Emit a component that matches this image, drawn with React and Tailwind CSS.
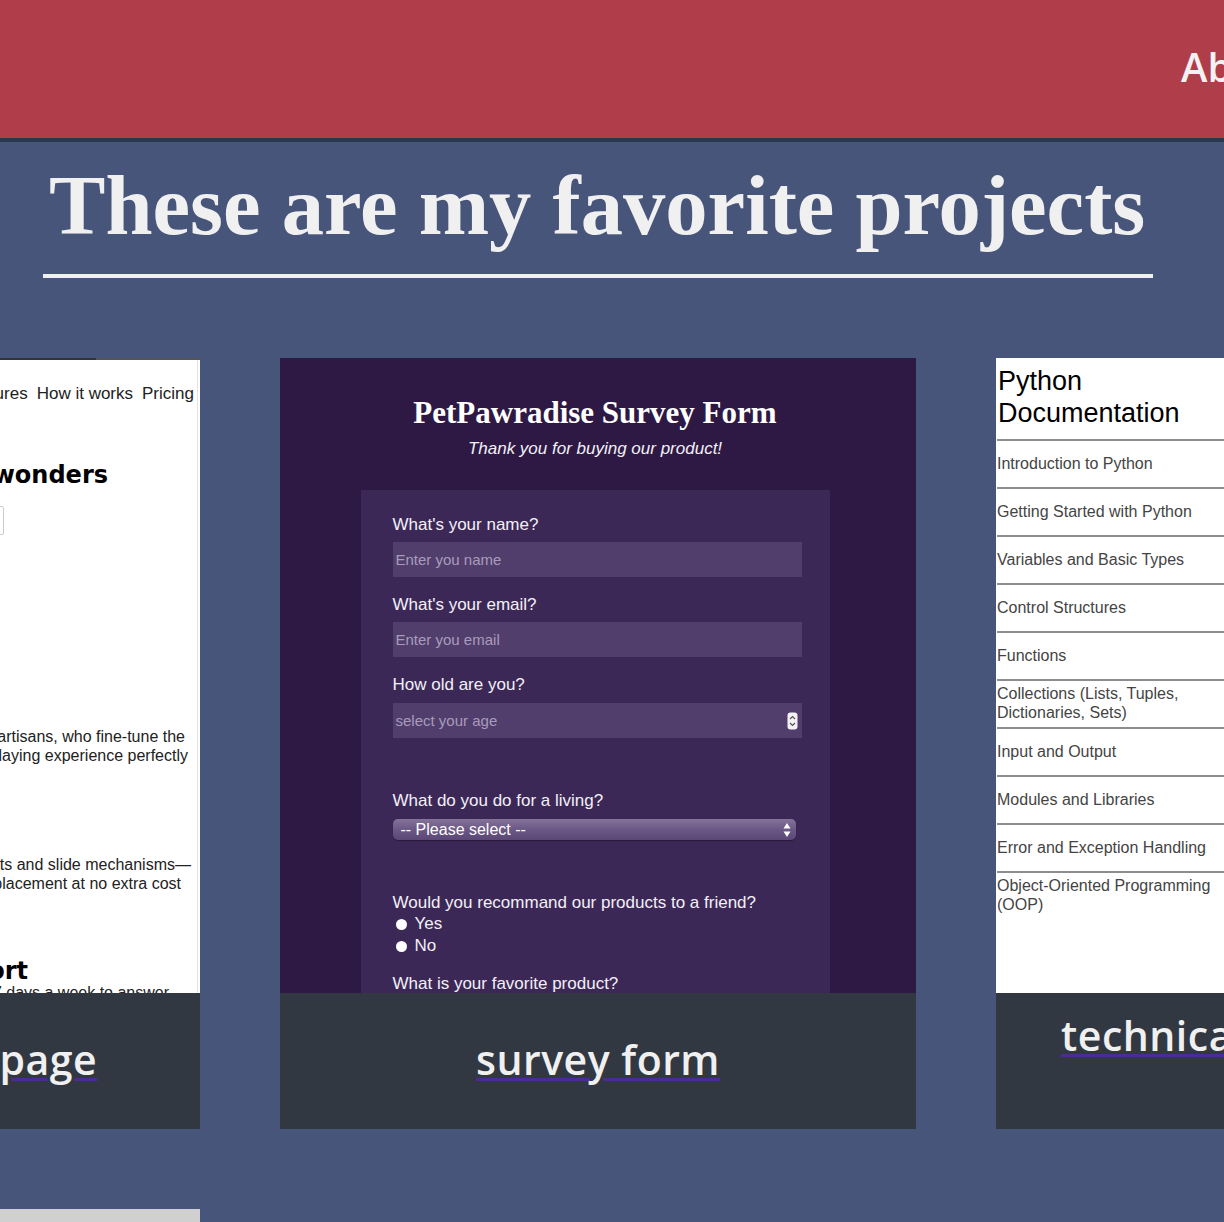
import React from 'react';

const sans = "font-['Liberation_Sans',Arial,sans-serif]";

function SpinIcon() {
    return (
        <svg width="11" height="18" viewBox="0 0 11 18">
            <rect x="0.5" y="0.5" width="10" height="17" rx="3" fill="#f4f2f7" />
            <path d="M3 7 L5.5 4.5 L8 7" stroke="#555" strokeWidth="1.2" fill="none" />
            <path d="M3 11 L5.5 13.5 L8 11" stroke="#555" strokeWidth="1.2" fill="none" />
        </svg>
    );
}

function SelectArrows() {
    return (
        <svg width="8" height="16" viewBox="0 0 8 16">
            <path d="M4 1 L7.5 6.5 L0.5 6.5 Z" fill="#fff" />
            <path d="M4 15 L7.5 9.5 L0.5 9.5 Z" fill="#fff" />
        </svg>
    );
}

function LandingShot() {
    return (
        <div className={`h-full bg-white flex flex-col ${sans} text-[#222]`}>
            <div className="flex h-[2px] shrink-0">
                <div className="w-[532px] bg-[#333]" />
                <div className="flex-1 bg-[#555]" />
            </div>
            <div className="flex flex-1">
                <div className="flex-1 flex flex-col whitespace-nowrap">
                    <nav className="mt-[24px] flex justify-end gap-[9px] pr-[3px] text-[17px] leading-[20px] text-[#222]">
                        <span>Home</span>
                        <span>Features</span>
                        <span>How it works</span>
                        <span>Pricing</span>
                    </nav>
                    <h3 className="mt-[56px] pr-[89px] text-right font-['DejaVu_Sans',sans-serif] font-bold text-[24px] leading-[30px] text-black">
                        Handcrafted piano wonders
                    </h3>
                    <div className="mt-[16px] mr-[193px] ml-auto w-[300px] h-[29px] border border-[#ccc] rounded-[2px]" />
                    <p className="mt-[192px] text-right pr-[12px] text-[16px] leading-[19px]">
                        Every piano is tuned by our master artisans, who fine-tune the
                    </p>
                    <p className="text-right pr-[9px] text-[16px] leading-[19px]">
                        sound and action to make your playing experience perfectly
                    </p>
                    <p className="mt-[90px] text-right pr-[6px] text-[16px] leading-[19px]">
                        We guarantee all of our keys, pedal parts and slide mechanisms—
                    </p>
                    <p className="text-right pr-[16px] text-[16px] leading-[19px]">
                        if anything breaks we'll send a replacement at no extra cost
                    </p>
                    <h3 className="mt-[63px] pr-[169px] text-right font-['DejaVu_Sans',sans-serif] font-bold text-[24px] leading-[30px] text-black">
                        24/7 Support
                    </h3>
                    <p className="mt-[-3px] text-right pr-[28px] text-[16px] leading-[19px]">
                        Our team is here 24 hours a day, 7 days a week to answer
                    </p>
                </div>
                <div className="w-px bg-[#e3e3e3]" />
                <div className="w-[2px]" />
            </div>
        </div>
    );
}

function SurveyShot() {
    return (
        <div className={`h-full bg-[#2d1944] flex flex-col items-center pr-[6px] ${sans} text-[#f2f0f5]`}>
            <h3 className="mt-[37px] font-['Liberation_Serif',serif] font-bold text-[31px] leading-[36px] text-white">
                PetPawradise Survey Form
            </h3>
            <p className="mt-[8px] italic text-[17px] leading-[20px]">Thank you for buying our product!</p>
            <div className="mt-[31px] w-[469px] flex-1 bg-[#3c2857] pl-[32px] pt-[25px] text-[17px] leading-[20px]">
                <div>What's your name?</div>
                <div className="mt-[7px] w-[409px] h-[35px] bg-[#513e6c] flex items-center pl-[3px] text-[15px] text-[#a99bbb]">
                    Enter you name
                </div>
                <div className="mt-[18px]">What's your email?</div>
                <div className="mt-[7px] w-[409px] h-[35px] bg-[#513e6c] flex items-center pl-[3px] text-[15px] text-[#a99bbb]">
                    Enter you email
                </div>
                <div className="mt-[18px]">How old are you?</div>
                <div className="mt-[8px] w-[409px] h-[35px] bg-[#513e6c] flex items-center justify-between pl-[3px] pr-[4px] text-[15px] text-[#a99bbb]">
                    <span>select your age</span>
                    <SpinIcon />
                </div>
                <div className="mt-[53px]">What do you do for a living?</div>
                <div className="mt-[8px] w-[403px] h-[21px] rounded-[5px] bg-gradient-to-b from-[#857399] via-[#6b5886] to-[#5a4775] shadow-[0_1px_1px_rgba(0,0,0,0.35)] flex items-center justify-between pl-[8px] pr-[5px] text-[16px] text-white">
                    <span>-- Please select --</span>
                    <SelectArrows />
                </div>
                <div className="mt-[53px]">Would you recommand our products to a friend?</div>
                <div className="flex items-center gap-[8px] leading-[22px]">
                    <span className="ml-[3px] w-[11px] h-[11px] rounded-full bg-white" />
                    <span>Yes</span>
                </div>
                <div className="flex items-center gap-[8px] leading-[22px]">
                    <span className="ml-[3px] w-[11px] h-[11px] rounded-full bg-white" />
                    <span>No</span>
                </div>
                <div className="mt-[17px]">What is your favorite product?</div>
            </div>
        </div>
    );
}

const docItems = [
    'Introduction to Python',
    'Getting Started with Python',
    'Variables and Basic Types',
    'Control Structures',
    'Functions',
    'Collections (Lists, Tuples, Dictionaries, Sets)',
    'Input and Output',
    'Modules and Libraries',
    'Error and Exception Handling',
    'Object-Oriented Programming (OOP)',
];

function DocsShot() {
    return (
        <div className={`h-full bg-white ${sans}`}>
            <div className="w-[230px] pl-[1px]">
                <h3 className="h-[81px] pt-[7px] pl-[1px] text-[27px] leading-[32px] text-black">Python Documentation</h3>
                {docItems.map((item) => (
                    <div
                        key={item}
                        className="h-[48px] border-t-2 border-[#8d8d8d] flex items-center pb-[2px] text-[16px] leading-[19px] text-[#444]"
                    >
                        {item}
                    </div>
                ))}
            </div>
        </div>
    );
}

function ProjectCard({ title, children }) {
    return (
        <div className="w-[636px] shrink-0 flex flex-col">
            <div className="h-[635px] overflow-hidden">{children}</div>
            <div className="h-[136px] bg-[#323842] flex items-center justify-center px-[40px] pb-[4px] text-center">
                <span className="font-['Open_Sans',sans-serif] font-semibold text-[41px] leading-[48px] tracking-[0.5px] text-[#f0f0f0] underline decoration-[#4f2a92] decoration-[3px] underline-offset-[3px]">
                    {title}
                </span>
            </div>
        </div>
    );
}

export default function App() {
    return (
        <div className="h-[1222px] w-full overflow-hidden bg-[#48557a]">
            <header className="h-[142px] bg-[#af3d4a] border-b-4 border-[#2b3651] flex items-center pl-[1181px] pb-[5px] whitespace-nowrap">
                <nav className="flex gap-[40px] font-['Open_Sans',sans-serif] font-semibold text-[40px] text-[#f2f2f2]">
                    <span>About</span>
                    <span>Projects</span>
                    <span>Contact</span>
                </nav>
            </header>

            <section>
                <h2 className="mt-[22px] mx-[43px] w-[1110px] h-[114px] pl-[6px] border-b-4 border-[#f0f0f0] font-['Liberation_Serif',serif] font-bold text-[84.6px] leading-[84px] text-[#f0f0f0] whitespace-nowrap">
                    These are my favorite projects
                </h2>

                <div className="mt-[80px] ml-[-436px] flex flex-col gap-[80px]">
                    <div className="flex gap-[80px]">
                        <ProjectCard title="product landing page">
                            <LandingShot />
                        </ProjectCard>
                        <ProjectCard title="survey form">
                            <SurveyShot />
                        </ProjectCard>
                        <ProjectCard title="technical documentation page">
                            <DocsShot />
                        </ProjectCard>
                    </div>
                    <div className="flex gap-[80px]">
                        <ProjectCard title="tribute page">
                            <div className="h-full bg-[#d0d0d0]" />
                        </ProjectCard>
                    </div>
                </div>
            </section>
        </div>
    );
}
